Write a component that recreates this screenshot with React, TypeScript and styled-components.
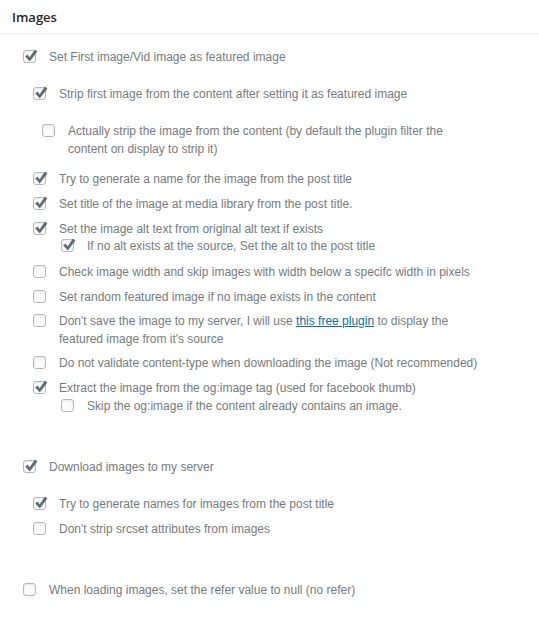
import React from 'react'
import styled, { createGlobalStyle } from 'styled-components'

const GlobalStyle = createGlobalStyle`
  html, body {
    margin: 0;
    padding: 0;
    background: #fff;
  }
`

const Panel = styled.div`
  width: 539px;
  min-height: 619px;
  background: #fff;
  font-family: "Liberation Sans", Arial, sans-serif;
`

const PanelHeader = styled.h2`
  margin: 0;
  height: 34px;
  box-sizing: border-box;
  padding: 8px 12px 0;
  border-bottom: 1px solid #eeeeee;
  font-family: "Open Sans", "Noto Sans", sans-serif;
  font-size: 13px;
  font-weight: 600;
  line-height: 18px;
  color: #23282d;
`

const OptionList = styled.div`
  display: flex;
  flex-direction: column;
  padding: 14px 56px 0 23px;
`

const OptionRow = styled.label<{ $indent: number; $gap: number }>`
  display: flex;
  align-items: flex-start;
  margin-left: ${(p) => p.$indent}px;
  margin-top: ${(p) => p.$gap}px;
  font-size: 12px;
  line-height: 18px;
  color: #757b80;
  cursor: pointer;
`

const Box = styled.span`
  position: relative;
  flex: none;
  width: 13px;
  height: 13px;
  margin: 2px 13px 0 0;
  box-sizing: border-box;
  border: 1px solid #b4b9be;
  border-radius: 3px;
  background: #fbfbfb;
  box-shadow: inset 0 1px 2px rgba(0, 0, 0, 0.08);
`

const CheckMark = styled.svg`
  position: absolute;
  left: 0;
  top: -2px;
  width: 14px;
  height: 14px;
  overflow: visible;
`

const Label = styled.span`
  flex: 1;
`

const Link = styled.a`
  color: #0073aa;
  text-decoration: underline;
`

const Checkbox = ({ checked }: { checked: boolean }) => (
  <Box>
    {checked && (
      <CheckMark viewBox="0 0 14 14">
        <path d="M1.2 7.6 L3.5 5.6 L5.6 8.2 L11 0.6 L13.4 2.6 L5.8 12.4 Z" fill="#5f6d75" />
      </CheckMark>
    )}
  </Box>
)

type Option = {
  label: React.ReactNode
  checked: boolean
  indent: number
  gap: number
}

const options: Option[] = [
  { label: 'Set First image/Vid image as featured image', checked: true, indent: 0, gap: 0 },
  { label: 'Strip first image from the content after setting it as featured image', checked: true, indent: 10, gap: 19 },
  {
    label: 'Actually strip the image from the content (by default the plugin filter the content on display to strip it)',
    checked: false,
    indent: 19,
    gap: 19,
  },
  { label: 'Try to generate a name for the image from the post title', checked: true, indent: 10, gap: 12 },
  { label: 'Set title of the image at media library from the post title.', checked: true, indent: 10, gap: 7 },
  { label: 'Set the image alt text from original alt text if exists', checked: true, indent: 10, gap: 7 },
  { label: 'If no alt exists at the source, Set the alt to the post title', checked: true, indent: 38, gap: -1 },
  { label: 'Check image width and skip images with width below a specifc width in pixels', checked: false, indent: 10, gap: 8 },
  { label: 'Set random featured image if no image exists in the content', checked: false, indent: 10, gap: 7 },
  {
    label: (
      <>
        Don't save the image to my server, I will use <Link href="#">this free plugin</Link> to display the featured
        image from it's source
      </>
    ),
    checked: false,
    indent: 10,
    gap: 6,
  },
  { label: 'Do not validate content-type when downloading the image (Not recommended)', checked: false, indent: 10, gap: 6 },
  { label: 'Extract the image from the og:image tag (used for facebook thumb)', checked: true, indent: 10, gap: 7 },
  { label: 'Skip the og:image if the content already contains an image.', checked: false, indent: 38, gap: 0 },
  { label: 'Download images to my server', checked: true, indent: 0, gap: 43 },
  { label: 'Try to generate names for images from the post title', checked: true, indent: 10, gap: 19 },
  { label: "Don't strip srcset attributes from images", checked: false, indent: 10, gap: 7 },
  { label: 'When loading images, set the refer value to null (no refer)', checked: false, indent: 0, gap: 43 },
]

export default function App() {
  return (
    <>
      <GlobalStyle />
      <Panel>
        <PanelHeader>Images</PanelHeader>
        <OptionList>
          {options.map((option, i) => (
            <OptionRow key={i} $indent={option.indent} $gap={option.gap}>
              <Checkbox checked={option.checked} />
              <Label>{option.label}</Label>
            </OptionRow>
          ))}
        </OptionList>
      </Panel>
    </>
  )
}
